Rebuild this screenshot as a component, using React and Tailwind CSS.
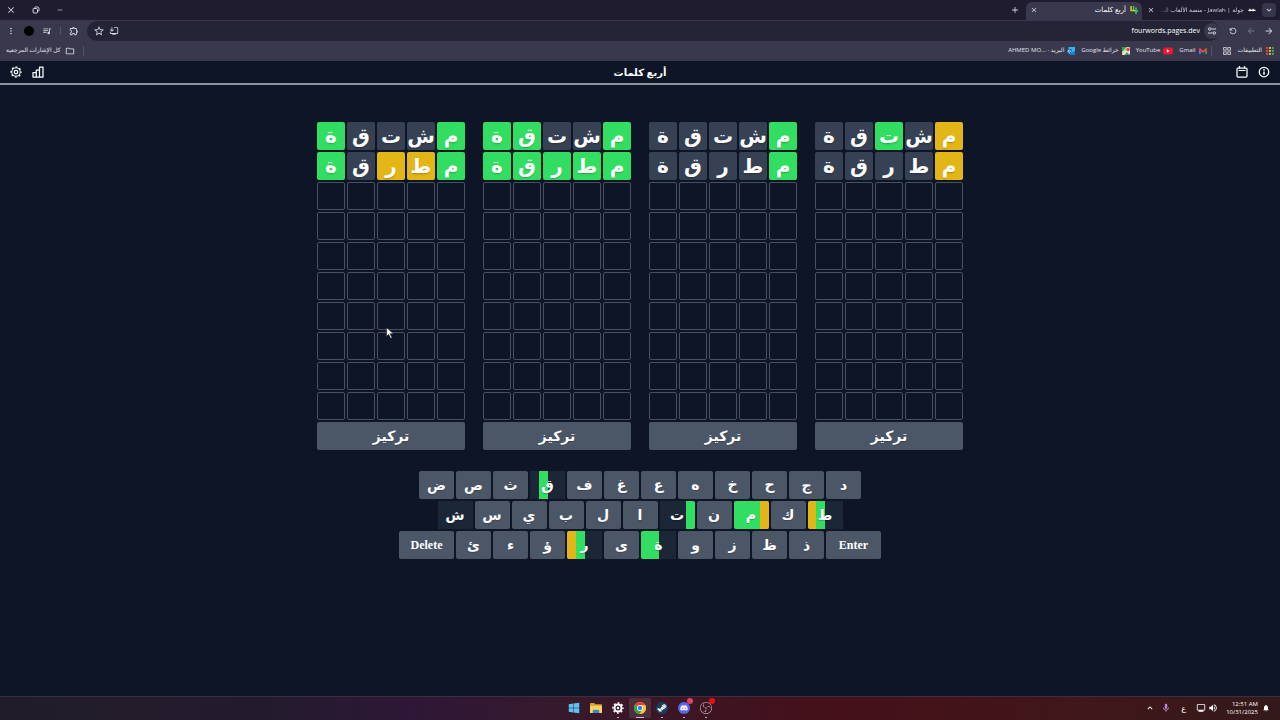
import { FaWindows, FaSteamSymbol, FaDiscord } from 'react-icons/fa';
import {
  MdClose, MdRemove, MdAdd, MdKeyboardArrowDown, MdKeyboardArrowUp,
  MdArrowForward, MdArrowBack, MdRefresh, MdOutlineExtension, MdQueueMusic,
  MdMoreVert, MdStarBorder, MdOutlineInstallDesktop, MdOutlineFolder,
  MdOutlineMic, MdVolumeUp, MdOutlineMonitor, MdNotifications, MdGridView,
} from 'react-icons/md';
import { SiObsstudio } from 'react-icons/si';

const ROWS = 10;

// a = absent, g = right place, y = wrong place
const boards = [
  { id: 1, guesses: [['مشتقة', 'yagaa'], ['مطرقة', 'yaaaa']] },
  { id: 2, guesses: [['مشتقة', 'gaaaa'], ['مطرقة', 'gaaaa']] },
  { id: 3, guesses: [['مشتقة', 'gaagg'], ['مطرقة', 'ggggg']] },
  { id: 4, guesses: [['مشتقة', 'gaaag'], ['مطرقة', 'gyyag']] },
];

const keyRows = [
  ['د', 'ج', 'ح', 'خ', 'ه', 'ع', 'غ', 'ف', 'ق', 'ث', 'ص', 'ض'],
  ['ط', 'ك', 'م', 'ن', 'ت', 'ا', 'ل', 'ب', 'ي', 'س', 'ش'],
  ['Enter', 'ذ', 'ظ', 'ز', 'و', 'ة', 'ى', 'ر', 'ؤ', 'ء', 'ئ', 'Delete'],
];

// one letter per board, left to right
const keyState = {
  'ق': 'agaa',
  'ط': 'ygaa',
  'م': 'gggy',
  'ت': 'aaag',
  'ش': 'aaaa',
  'ة': 'ggaa',
  'ر': 'ygaa',
};

const cellColors = { a: 'bg-[#364253]', g: 'bg-[#32de62]', y: 'bg-[#e2b616]' };
const stripColors = { a: 'bg-[#1b2636]', g: 'bg-[#32de62]', y: 'bg-[#e2b616]' };

function FourIcon() {
  return (
    <svg viewBox="0 0 16 16" className="size-2 shrink-0" fill="none" strokeWidth="3">
      <path d="M2 0v9h5" stroke="#e8c51d" />
      <path d="M7 0v10" stroke="#35cf63" />
      <path d="M12 3v13M9 10h7" stroke="#35cf63" />
      <path d="M6 9h4" stroke="#e8c51d" />
    </svg>
  );
}

function AppsIcon() {
  const colors = ['#e5493a', '#f2b92d', '#47a95b'];
  return (
    <svg viewBox="0 0 9 9" className="size-2 shrink-0">
      {[0, 1, 2].map((y) => colors.map((c, x) => (
        <rect key={`${x}${y}`} x={x * 3.3} y={y * 3.3} width="2.2" height="2.2" fill={c} />
      )))}
    </svg>
  );
}

function GmailIcon() {
  return (
    <svg viewBox="0 0 16 12" className="h-2 w-2 shrink-0">
      <path d="M0 1.5V12h3.5V4z" fill="#4285f4" />
      <path d="M16 1.5V12h-3.5V4z" fill="#34a853" />
      <path d="M0 1l2-1 6 5 6-5 2 1v3L8 10 0 4z" fill="#ea4335" />
    </svg>
  );
}

function YouTubeIcon() {
  return (
    <svg viewBox="0 0 18 13" className="h-2 w-2.5 shrink-0">
      <rect width="18" height="13" rx="4" fill="#f0142c" />
      <path d="M7 3.5v6l5-3z" fill="#fff" />
    </svg>
  );
}

function MapsIcon() {
  return (
    <svg viewBox="0 0 16 16" className="size-2 shrink-0">
      <rect width="16" height="16" rx="2" fill="#e7ecef" />
      <path d="M0 0h10L0 10z" fill="#2ea457" />
      <path d="M0 12L12 0h3L0 15z" fill="#f5c431" />
      <path d="M5 16l5-6 6 6z" fill="#2ea457" />
      <circle cx="12" cy="5" r="3.5" fill="#e34436" />
    </svg>
  );
}

function OutlookIcon() {
  return (
    <svg viewBox="0 0 16 16" className="size-2 shrink-0">
      <rect x="3" width="13" height="14" fill="#35b5f1" />
      <path d="M4 16l12-9v9z" fill="#1b78d0" />
      <rect y="4" width="9" height="9" rx="1" fill="#0a5cad" />
      <circle cx="4.5" cy="8.5" r="2.3" fill="none" stroke="#fff" strokeWidth="1.5" />
    </svg>
  );
}

function ChromeIcon() {
  return (
    <svg viewBox="0 0 24 24" className="size-3">
      <circle cx="12" cy="12" r="12" fill="#f7c52b" />
      <path d="M12 12L1.6 6a12 12 0 0 1 20.8 0z" fill="#e5412f" />
      <path d="M12 12L1.6 6A12 12 0 0 0 11 24l5.5-9z" fill="#2fa24f" />
      <path d="M12 6h10.4a12 12 0 0 1-10.4 18l5.2-9z" fill="#f7c52b" />
      <circle cx="12" cy="12" r="6" fill="#fff" />
      <circle cx="12" cy="12" r="4.5" fill="#3b7ded" />
    </svg>
  );
}

function FolderIcon() {
  return (
    <svg viewBox="0 0 26 22" className="size-3">
      <path d="M0 2q0-2 2-2h7l3 3h12q2 0 2 2v15q0 2-2 2H2q-2 0-2-2z" fill="#dca326" />
      <rect y="6" width="26" height="16" rx="2" fill="#fcd364" />
      <path d="M6 22v-5q0-2 2-2h10q2 0 2 2v5z" fill="#3d86c6" />
    </svg>
  );
}

function RestoreIcon() {
  return (
    <svg viewBox="0 0 16 16" className="size-2" fill="none" stroke="currentColor" strokeWidth="2">
      <rect x="2" y="5" width="9" height="9" rx="2" />
      <path d="M5 3q1-1 3-1h3q3 0 3 3v3q0 2-1 3" />
    </svg>
  );
}

function SiteIcon() {
  return (
    <svg viewBox="0 0 16 16" className="size-2" fill="none" stroke="currentColor" strokeWidth="2">
      <path d="M7 4h9M0 12h9" />
      <circle cx="3.5" cy="4" r="2.5" />
      <circle cx="12.5" cy="12" r="2.5" />
    </svg>
  );
}

function StatsIcon() {
  return (
    <svg viewBox="0 0 24 24" className="size-3" fill="none" stroke="currentColor" strokeWidth="2.5" strokeLinejoin="round">
      <path d="M2 13h6.5v9H2zM8.5 8H15v14H8.5zM15 2h7v20h-7z" />
    </svg>
  );
}

function GearIcon() {
  return (
    <svg viewBox="0 0 24 24" className="size-3" fill="none" stroke="currentColor">
      <circle cx="12" cy="12" r="8.5" strokeWidth="2" />
      <circle cx="12" cy="12" r="10" strokeWidth="2.5" pathLength="16" strokeDasharray="1 1" strokeDashoffset="0.5" />
      <circle cx="12" cy="12" r="3.5" strokeWidth="2.5" />
    </svg>
  );
}

function InfoIcon() {
  return (
    <svg viewBox="0 0 24 24" className="size-3" fill="none" stroke="currentColor" strokeWidth="2.5">
      <circle cx="12" cy="12" r="9.5" />
      <path d="M12 11v6.500M12 6v3" strokeWidth="3" />
    </svg>
  );
}

function CalendarIcon() {
  return (
    <svg viewBox="0 0 24 24" className="size-3" fill="none" stroke="currentColor" strokeWidth="2.5">
      <rect x="2" y="4" width="20" height="18" rx="2" />
      <path d="M7 0v5M17 0v5" />
      <path d="M5 9h14" strokeWidth="2" />
    </svg>
  );
}

// white cog with a hollow hub
function CogIcon() {
  return (
    <svg viewBox="0 0 24 24" className="size-3" fill="none" stroke="currentColor">
      <circle cx="12" cy="12" r="7" strokeWidth="4" />
      <circle cx="12" cy="12" r="10" strokeWidth="3" pathLength="16" strokeDasharray="1 1" strokeDashoffset="0.5" />
      <circle cx="12" cy="12" r="2.5" fill="#fff" stroke="none" />
    </svg>
  );
}

function TabStrip() {
  return (
    <div className="flex h-5 items-stretch bg-[#1e1c2e] text-[#d6d4e0]">
      <button aria-label="بحث في علامات التبويب" className="ms-1 flex size-3.5 items-center justify-center self-center rounded bg-[#37354a]">
        <MdKeyboardArrowDown className="size-2.5" />
      </button>
      <div className="flex w-[120px] items-center gap-1 ps-1.5">
        <svg viewBox="0 0 9 5" className="h-1 w-2 shrink-0">
          <path d="M0 3h9M2 1v3M6 1v3" stroke="#fff" strokeWidth="1.5" />
        </svg>
        <span className="grow text-[6px] whitespace-nowrap mask-l-from-80%">جولة | Jawlah - منصة الألعاب الت</span>
        <button aria-label="إغلاق"><MdClose className="size-2" /></button>
        <span className="w-1" />
      </div>
      <div className="mt-0.5 flex w-[116px] items-center gap-1 rounded-t-md bg-[#3a384c] px-1 pb-0.5">
        <FourIcon />
        <span className="grow text-[7px] text-white">أربع كلمات</span>
        <button aria-label="إغلاق"><MdClose className="size-2" /></button>
      </div>
      <button aria-label="علامة تبويب جديدة" className="ms-1.5"><MdAdd className="size-2.5" /></button>
      <div className="ms-auto flex items-center gap-4 pe-1.5">
        <button aria-label="تصغير"><MdRemove className="size-2" /></button>
        <button aria-label="استعادة"><RestoreIcon /></button>
        <button aria-label="إغلاق النافذة"><MdClose className="size-2.5" /></button>
      </div>
    </div>
  );
}

function Toolbar() {
  return (
    <div className="flex h-[22px] items-center bg-[#3a384c] px-1.5 text-[#d6d4e0]">
      <div className="flex items-center gap-2">
        <button aria-label="رجوع"><MdArrowForward className="size-2.5" /></button>
        <button aria-label="للأمام" className="text-[#77758a]"><MdArrowBack className="size-2.5" /></button>
        <button aria-label="تحديث"><MdRefresh className="size-2.5 -scale-x-100" /></button>
      </div>
      <div className="ms-2 flex h-5 grow items-center gap-1 rounded-full bg-[#252336] pe-1.5">
        <button aria-label="معلومات الموقع" className="flex size-4 items-center justify-center rounded-full bg-[#3a384c]">
          <SiteIcon />
        </button>
        <input
          aria-label="العنوان"
          dir="ltr"
          defaultValue="fourwords.pages.dev"
          className="min-w-0 grow bg-transparent text-right text-[7px] text-white outline-none"
        />
        <button aria-label="تثبيت التطبيق"><MdOutlineInstallDesktop className="size-2.5 -scale-x-100" /></button>
        <button aria-label="إضافة إشارة"><MdStarBorder className="size-3" /></button>
      </div>
      <div className="ms-2 flex items-center gap-2">
        <button aria-label="الإضافات"><MdOutlineExtension className="size-2.5" /></button>
        <span className="h-2 w-px bg-[#55536a]" />
        <button aria-label="الوسائط"><MdQueueMusic className="size-2.5" /></button>
        <button aria-label="الحساب" className="size-2.5 rounded-full bg-black" />
        <button aria-label="القائمة"><MdMoreVert className="size-2.5" /></button>
      </div>
    </div>
  );
}

const bookmarks = [
  { label: 'Gmail', Icon: GmailIcon },
  { label: 'YouTube', Icon: YouTubeIcon },
  { label: 'خرائط Google', Icon: MapsIcon },
  { label: 'البريد - ...AHMED MO', Icon: OutlookIcon },
];

function Bookmarks() {
  return (
    <nav className="flex h-[19px] items-center bg-[#3a384c] px-1.5 pb-0.5 text-[6px] text-[#e4e2ec]">
      <a href="#apps" className="flex items-center gap-1"><AppsIcon />التطبيقات</a>
      <a href="#groups" aria-label="المجموعات" className="ms-1.5"><MdGridView className="size-2.5" /></a>
      <span className="ms-2.5 h-2.5 w-px bg-[#55536a]" />
      <div className="ms-1 flex items-center gap-1.5">
        {bookmarks.map(({ label, Icon }) => (
          <a key={label} href="#bookmark" className="flex items-center gap-[3px] whitespace-nowrap">
            <Icon />
            <span>{label}</span>
          </a>
        ))}
      </div>
      <span className="ms-auto h-2.5 w-px bg-[#55536a]" />
      <a href="#all" className="ms-2 flex items-center gap-1"><MdOutlineFolder className="size-2.5" />كل الإشارات المرجعية</a>
    </nav>
  );
}

function Header() {
  return (
    <header className="flex h-6 items-center justify-between border-b-2 border-[#8b929c] px-2.5 text-white">
      <div className="flex w-16 items-center gap-2.5">
        <button aria-label="معلومات"><InfoIcon /></button>
        <button aria-label="الأرشيف"><CalendarIcon /></button>
      </div>
      <h1 className="text-[10px] font-bold">أربع كلمات</h1>
      <div className="flex w-16 items-center justify-end gap-2.5">
        <button aria-label="الإحصائيات"><StatsIcon /></button>
        <button aria-label="الإعدادات"><GearIcon /></button>
      </div>
    </header>
  );
}

function Cell({ letter, state }) {
  if (!letter) return <div className="size-7 rounded-xs border border-[#465161]" />;
  return (
    <div className={`flex size-7 items-center justify-center rounded-xs text-xl leading-7 font-bold text-white text-shadow-sm ${cellColors[state]}`}>
      {letter}
    </div>
  );
}

function Board({ guesses }) {
  return (
    <section className="flex flex-col gap-0.5">
      {Array.from({ length: ROWS }, (_, row) => (
        <div key={row} className="flex gap-0.5">
          {Array.from({ length: 5 }, (_, col) => (
            <Cell key={col} letter={guesses[row]?.[0][col]} state={guesses[row]?.[1][col]} />
          ))}
        </div>
      ))}
      <button className="h-7 rounded-xs bg-[#4b5667] text-sm leading-7 font-bold text-white text-shadow-xs">تركيز</button>
    </section>
  );
}

function Key({ label }) {
  const state = keyState[label];
  if (label.length > 1) {
    return (
      <button className="h-7 w-[55px] rounded-xs bg-[#4b5667] font-['Liberation_Serif',serif] text-xs font-bold text-white">
        {label}
      </button>
    );
  }
  return (
    <button className="relative h-7 w-[35px] overflow-hidden rounded-xs bg-[#4b5667] text-sm font-bold text-white">
      {state && (
        <span dir="ltr" className="absolute inset-0 grid grid-cols-4">
          {state.split('').map((s, i) => <span key={i} className={stripColors[s]} />)}
        </span>
      )}
      <span className="relative text-shadow-xs">{label}</span>
    </button>
  );
}

function TaskButton({ label, active, running, children }) {
  return (
    <button aria-label={label} className={`relative flex h-5 w-[22px] items-center justify-center rounded-xs ${active ? 'bg-white/10' : ''}`}>
      {children}
      {active && <span className="absolute bottom-0 h-px w-2 bg-[#e6b8d8]" />}
      {running && <span className="absolute bottom-0 h-px w-0.5 bg-[#b9aeb8]" />}
    </button>
  );
}

function Taskbar() {
  return (
    <footer dir="ltr" className="grid h-6 grid-cols-3 items-center border-t border-[#3a2f3e] bg-[linear-gradient(to_right,#211c2a,#221b2c_20%,#2e1737_32%,#37192b_45%,#45101a_65%,#40171a_85%,#33191b)] pb-0.5 text-white">
      <div />
      <div className="flex items-center justify-center">
        <TaskButton label="Start"><FaWindows className="size-3 text-[#5cc4f4]" /></TaskButton>
        <TaskButton label="Files"><FolderIcon /></TaskButton>
        <TaskButton label="Settings" running><CogIcon /></TaskButton>
        <TaskButton label="Chrome" active><ChromeIcon /></TaskButton>
        <TaskButton label="Steam" running>
          <span className="flex size-3 items-center justify-center rounded-full bg-[#16405f]"><FaSteamSymbol className="size-2.5" /></span>
        </TaskButton>
        <TaskButton label="Discord" running>
          <span className="flex size-3 items-center justify-center rounded-full bg-[#5865f2]"><FaDiscord className="size-2" /></span>
          <span className="absolute top-0 right-0.5 size-1.5 rounded-full bg-[#e0455c]" />
        </TaskButton>
        <TaskButton label="OBS" running>
          <SiObsstudio className="size-3 text-[#c9c4c8]" />
          <span className="absolute top-0 right-0.5 size-1.5 rounded-full bg-[#ee1010]" />
        </TaskButton>
      </div>
      <div className="flex items-center justify-end pe-2.5">
        <MdKeyboardArrowUp className="me-1.5 size-2.5" />
        <MdOutlineMic className="me-2.5 size-2.5 text-[#b58bd8]" />
        <span className="me-2.5 text-[8px]">ع</span>
        <MdOutlineMonitor className="me-0.5 size-2.5" />
        <MdVolumeUp className="me-2 size-2.5" />
        <div className="me-1 text-right text-[6px] leading-2">
          <div>12:51 AM</div>
          <div>10/31/2025</div>
        </div>
        <MdNotifications className="size-2" />
      </div>
    </footer>
  );
}

function Cursor() {
  return (
    <svg viewBox="0 0 12 18" className="pointer-events-none absolute top-[327px] left-[386px] h-3 w-2">
      <path d="M1 1v13l3-3 3 6 2-1-3-6h5z" fill="#fff" stroke="#222" strokeWidth="0.8" />
    </svg>
  );
}

export default function App() {
  return (
    <div dir="rtl" className="relative flex min-h-screen flex-col bg-[#0d1526] font-['Open_Sans','DejaVu_Sans',sans-serif]">
      <TabStrip />
      <Toolbar />
      <Bookmarks />
      <Header />
      <main className="flex grow flex-col items-center pt-[37px]">
        <div className="flex gap-[18px]">
          {boards.map((b) => <Board key={b.id} guesses={b.guesses} />)}
        </div>
        <div className="mt-[21px] flex flex-col items-center gap-0.5">
          {keyRows.map((row, i) => (
            <div key={i} className="flex gap-0.5">
              {row.map((k) => <Key key={k} label={k} />)}
            </div>
          ))}
        </div>
      </main>
      <Taskbar />
      <Cursor />
    </div>
  );
}
